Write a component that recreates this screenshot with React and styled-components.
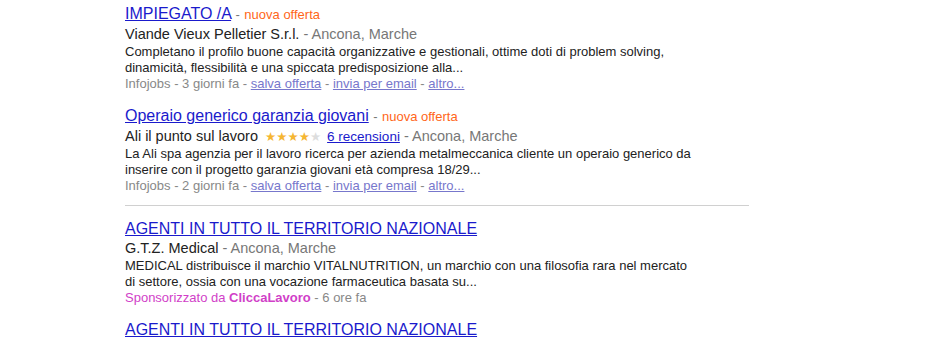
import React from "react";
import styled, { createGlobalStyle } from "styled-components";

const GlobalStyle = createGlobalStyle`
  * {
    margin: 0;
    padding: 0;
    box-sizing: border-box;
  }

  body {
    background: #fff;
    font-family: "Liberation Sans", Arial, sans-serif;
    color: #222;
  }
`;

const Page = styled.div`
  padding: 4px 0 0 125px;
  width: 749px;
`;

const Result = styled.div`
  margin-bottom: 14px;
`;

const Title = styled.div`
  font-size: 16px;
  line-height: 20px;
  white-space: nowrap;

  a {
    color: #1a1acc;
    text-decoration: underline;
  }
`;

const Dash = styled.span`
  color: #777;
  font-size: 13px;
`;

const New = styled.span`
  color: #ff6619;
  font-size: 13px;
`;

const Company = styled.div`
  font-size: 14.5px;
  line-height: 19px;
  color: #222;
  white-space: nowrap;
  display: flex;
  align-items: center;
`;

const Location = styled.span`
  color: #777;
  white-space: pre;
`;

const Stars = styled.span`
  display: inline-flex;
  margin: 0 6px 0 7px;
  font-size: 12.5px;
  font-family: "DejaVu Sans", sans-serif;
`;

const Star = styled.span`
  color: ${(p) => (p.$on ? "#f5b632" : "#ddd")};
`;

const Reviews = styled.a`
  color: #1a1acc;
  font-size: 13.5px;
  text-decoration: underline;
`;

const Desc = styled.div`
  font-size: 13px;
  line-height: 16px;
  color: #222;
  max-width: 570px;
`;

const Meta = styled.div`
  font-size: 13px;
  line-height: 16px;
  color: #888;
  white-space: nowrap;

  a {
    color: #7777cc;
    text-decoration: underline;
  }
`;

const Sponsor = styled.span`
  color: #d13fc8;

  b {
    font-weight: bold;
  }
`;

const Divider = styled.hr`
  border: none;
  border-top: 1px solid #d0d0d0;
  margin: -3px 0 13px;
  width: 624px;
`;

const jobs = [
  {
    title: "IMPIEGATO /A",
    company: "Viande Vieux Pelletier S.r.l.",
    desc: "Completano il profilo buone capacità organizzative e gestionali, ottime doti di problem solving, dinamicità, flessibilità e una spiccata predisposizione alla...",
    when: "3 giorni fa",
  },
  {
    title: "Operaio generico garanzia giovani",
    company: "Ali il punto sul lavoro",
    rating: 4,
    reviews: "6 recensioni",
    desc: "La Ali spa agenzia per il lavoro ricerca per azienda metalmeccanica cliente un operaio generico da inserire con il progetto garanzia giovani età compresa 18/29...",
    when: "2 giorni fa",
  },
];

const Rating = ({ value }) => (
  <Stars>
    {[0, 1, 2, 3, 4].map((i) => (
      <Star key={i} $on={i < value}>★</Star>
    ))}
  </Stars>
);

const JobResult = ({ job }) => (
  <Result>
    <Title>
      <a href="#">{job.title}</a> <Dash>-</Dash> <New>nuova offerta</New>
    </Title>
    <Company>
      {job.company}
      {job.rating && <Rating value={job.rating} />}
      {job.reviews && <Reviews href="#">{job.reviews}</Reviews>}
      <Location> - Ancona, Marche</Location>
    </Company>
    <Desc>{job.desc}</Desc>
    <Meta>
      Infojobs - {job.when} - <a href="#">salva offerta</a> -{" "}
      <a href="#">invia per email</a> - <a href="#">altro...</a>
    </Meta>
  </Result>
);

const App = () => (
  <>
    <GlobalStyle />
    <Page>
      {jobs.map((job) => (
        <JobResult key={job.title} job={job} />
      ))}
      <Divider />
      <Result>
        <Title>
          <a href="#">AGENTI IN TUTTO IL TERRITORIO NAZIONALE</a>
        </Title>
        <Company>
          G.T.Z. Medical
          <Location> - Ancona, Marche</Location>
        </Company>
        <Desc>
          MEDICAL distribuisce il marchio VITALNUTRITION, un marchio con una
          filosofia rara nel mercato di settore, ossia con una vocazione
          farmaceutica basata su...
        </Desc>
        <Meta>
          <Sponsor>
            Sponsorizzato da <b>CliccaLavoro</b>
          </Sponsor>{" "}
          - 6 ore fa
        </Meta>
      </Result>
      <Result>
        <Title>
          <a href="#">AGENTI IN TUTTO IL TERRITORIO NAZIONALE</a>
        </Title>
      </Result>
    </Page>
  </>
);

export default App;
